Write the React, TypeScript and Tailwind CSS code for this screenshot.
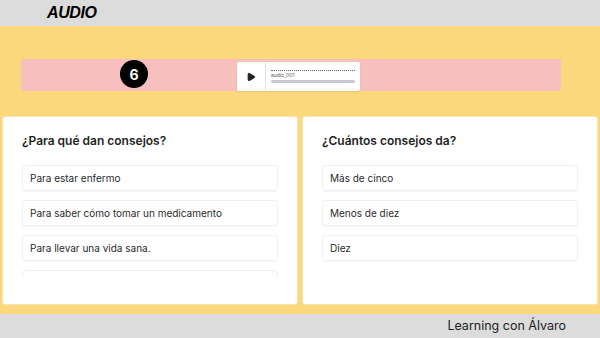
import { Play } from "lucide-react";

export default function App() {
  const leftOptions = [
    "Para estar enfermo",
    "Para saber cómo tomar un medicamento",
    "Para llevar una vida sana.",
    "",
  ];
  const rightOptions = ["Más de cinco", "Menos de diez", "Diez"];

  return (
    <div className="w-[600px] h-[338px] flex flex-col bg-[#fcd87c] font-['Inter',sans-serif] overflow-hidden">
      {/* header */}
      <div className="h-[26px] bg-[#dcdcdc] flex items-center pl-[47px]">
        <span className="font-['Liberation_Sans',sans-serif] font-bold italic text-[16px] text-black tracking-tight">
          AUDIO
        </span>
      </div>

      {/* audio bar */}
      <div className="mt-[33px] ml-[21px] w-[540px] h-[32px] bg-[#f8bfbf] rounded-[3px] flex items-center">
        <div className="ml-[99px] w-[28px] h-[28px] rounded-full bg-black text-white flex items-center justify-center text-[14px] font-bold mb-[2px]">
          6
        </div>
        <div className="ml-[89px] mt-[3px] w-[123px] h-[29px] bg-white rounded-[2px] shadow-[0_1px_2px_rgba(0,0,0,0.08)] flex">
          <div className="w-[29px] flex items-center justify-center border-r border-[#e4e4e4]">
            <Play className="w-[10px] h-[10px] text-[#222] fill-[#222]" />
          </div>
          <div className="flex-1 flex flex-col justify-center px-[5px]">
            <div className="border-t border-dotted border-[#666] mb-[1px]" />
            <span className="text-[5px] leading-[7px] text-[#555]">audio_001</span>
            <div className="h-[3px] rounded-full bg-[#c9c9d6] mt-[1px]" />
          </div>
        </div>
      </div>

      {/* cards */}
      <div className="mt-[25px] px-[2px] grid grid-cols-2 gap-[4px] h-[189px]">
        <Card title="¿Para qué dan consejos?" options={leftOptions} clip />
        <Card title="¿Cuántos consejos da?" options={rightOptions} />
      </div>

      {/* footer */}
      <div className="mt-auto h-[24px] bg-[#dcdcdc] flex items-center justify-end pr-[34px]">
        <span className="text-[12.5px] text-[#222]">Learning con Álvaro</span>
      </div>
    </div>
  );
}

function Card({
  title,
  options,
  clip,
}: {
  title: string;
  options: string[];
  clip?: boolean;
}) {
  return (
    <div className="bg-white rounded-[3px] border border-[#f6e3b4] px-[19px] pt-[15px]">
      <h2 className="text-[12px] font-semibold text-[#1f1f1f] leading-[18px]">{title}</h2>
      <div
        className={
          clip
            ? "mt-[15px] h-[112px] overflow-hidden flex flex-col gap-[9px]"
            : "mt-[15px] flex flex-col gap-[9px]"
        }
      >
        {options.map((o, i) => (
          <div
            key={i}
            className="shrink-0 h-[26px] rounded-[3px] border border-[#f0f0f0] shadow-[0_1px_1px_rgba(0,0,0,0.03)] flex items-center px-[7px] text-[10px] text-[#2a2a2a]"
          >
            {o}
          </div>
        ))}
      </div>
    </div>
  );
}
